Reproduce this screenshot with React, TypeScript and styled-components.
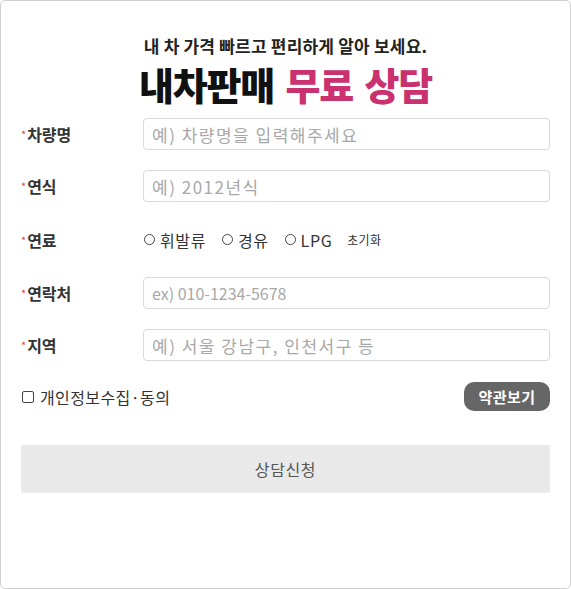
import React, { useState } from "react";
import styled, { createGlobalStyle } from "styled-components";

const GlobalStyle = createGlobalStyle`
  html, body {
    margin: 0;
    padding: 0;
    background: #fff;
  }
  body {
    font-family: "Noto Sans CJK KR", "Noto Sans", sans-serif;
  }
  * {
    box-sizing: border-box;
  }
`;

const fuels: string[] = ["휘발류", "경유", "LPG"];

function App() {
  const [fuel, setFuel] = useState<string>("");
  const [agree, setAgree] = useState<boolean>(false);

  return (
    <>
      <GlobalStyle />
      <Panel>
        <Heading>
          <SubTitle>내 차 가격 빠르고 편리하게 알아 보세요.</SubTitle>
          <MainTitle>
            내차판매 <Accent>무료 상담</Accent>
          </MainTitle>
        </Heading>

        <Form>
          <Row>
            <Label><Star>*</Star>차량명</Label>
            <Input type="text" placeholder="예) 차량명을 입력해주세요" />
          </Row>
          <Row>
            <Label><Star>*</Star>연식</Label>
            <Input type="text" placeholder="예) 2012년식" />
          </Row>
          <Row $tall>
            <Label><Star>*</Star>연료</Label>
            <RadioGroup>
              {fuels.map((f) => (
                <RadioItem key={f}>
                  <Radio
                    type="radio"
                    name="fuel"
                    checked={fuel === f}
                    onChange={() => setFuel(f)}
                  />
                  {f}
                </RadioItem>
              ))}
              <Reset type="button" onClick={() => setFuel("")}>초기화</Reset>
            </RadioGroup>
          </Row>
          <Row>
            <Label><Star>*</Star>연락처</Label>
            <Input type="text" $latin placeholder="ex) 010-1234-5678" />
          </Row>
          <Row>
            <Label><Star>*</Star>지역</Label>
            <Input type="text" placeholder="예) 서울 강남구, 인천서구 등" />
          </Row>
        </Form>

        <AgreeRow>
          <AgreeLabel>
            <Check type="checkbox" checked={agree} onChange={(e) => setAgree(e.target.checked)} />
            개인정보수집·동의
          </AgreeLabel>
          <TermsButton type="button">약관보기</TermsButton>
        </AgreeRow>

        <SubmitButton type="button">상담신청</SubmitButton>
      </Panel>
    </>
  );
}

const Panel = styled.div`
  width: 571px;
  height: 589px;
  border: 1px solid #cfcfcf;
  border-radius: 5px;
  padding: 33px 20px 0;
  display: flex;
  flex-direction: column;
`;

const Heading = styled.div`
  display: flex;
  flex-direction: column;
  align-items: center;
`;

const SubTitle = styled.div`
  font-size: 17px;
  line-height: 24px;
  font-weight: 700;
  color: #222;
  letter-spacing: 0.2px;
`;

const MainTitle = styled.div`
  margin-top: 4px;
  font-size: 38px;
  line-height: 44px;
  font-weight: 900;
  color: #111;
  letter-spacing: -1.2px;
  word-spacing: 4px;
  white-space: pre;
`;

const Accent = styled.span`
  color: #c9326f;
`;

const Form = styled.div`
  margin-top: 12px;
  display: flex;
  flex-direction: column;
  gap: 20px;
`;

const Row = styled.div<{ $tall?: boolean }>`
  display: flex;
  align-items: center;
  height: ${(p) => (p.$tall ? "35px" : "32px")};
`;

const Label = styled.div`
  width: 122px;
  flex-shrink: 0;
  font-size: 16px;
  font-weight: 700;
  color: #333;
  display: flex;
  align-items: center;
`;

const Star = styled.span`
  color: #e0474c;
  font-size: 11px;
  font-weight: 400;
  margin-right: 1px;
`;

const Input = styled.input<{ $latin?: boolean }>`
  flex: 1;
  height: 32px;
  border: 1px solid #d9d9d9;
  border-radius: 4px;
  padding: 0 8px;
  font-family: "Noto Sans CJK KR", "Noto Sans", sans-serif;
  font-size: ${(p) => (p.$latin ? "16px" : "17px")};
  letter-spacing: ${(p) => (p.$latin ? "0" : "1.5px")};
  color: #333;
  outline: none;

  &::placeholder {
    color: #a8a8a8;
  }
`;

const RadioGroup = styled.div`
  display: flex;
  align-items: center;
  gap: 15px;
`;

const RadioItem = styled.label`
  display: flex;
  align-items: center;
  gap: 5px;
  font-size: 16px;
  letter-spacing: 0.6px;
  color: #333;
  cursor: pointer;
`;

const Radio = styled.input`
  appearance: none;
  margin: 0 0 0 1px;
  width: 11px;
  height: 11px;
  border: 1px solid #444;
  border-radius: 50%;
  background: #fff;

  &:checked {
    background: radial-gradient(#444 0 2.5px, #fff 3px);
  }
`;

const Reset = styled.button`
  border: none;
  background: none;
  padding: 0;
  font-family: "Noto Sans CJK KR", "Noto Sans", sans-serif;
  font-size: 12px;
  letter-spacing: 0.3px;
  color: #333;
  cursor: pointer;
`;

const AgreeRow = styled.div`
  margin-top: 21px;
  height: 29px;
  display: flex;
  align-items: center;
  justify-content: space-between;
`;

const AgreeLabel = styled.label`
  display: flex;
  align-items: center;
  gap: 6px;
  font-size: 16px;
  letter-spacing: 0.4px;
  color: #333;
  cursor: pointer;
`;

const Check = styled.input`
  appearance: none;
  margin: 0 0 0 1px;
  width: 12px;
  height: 12px;
  border: 1px solid #444;
  border-radius: 2px;
  background: #fff;

  &:checked {
    background: #444;
  }
`;

const TermsButton = styled.button`
  width: 86px;
  height: 29px;
  border: none;
  border-radius: 10px;
  background: #666;
  color: #fff;
  font-family: "Noto Sans CJK KR", "Noto Sans", sans-serif;
  font-size: 15px;
  font-weight: 700;
  letter-spacing: 0.5px;
  cursor: pointer;
`;

const SubmitButton = styled.button`
  margin-top: 34px;
  width: 100%;
  height: 48px;
  border: none;
  border-radius: 2px;
  background: #e9e9e9;
  color: #555;
  font-family: "Noto Sans CJK KR", "Noto Sans", sans-serif;
  font-size: 16px;
  letter-spacing: 0.6px;
  cursor: pointer;
`;

export default App;
